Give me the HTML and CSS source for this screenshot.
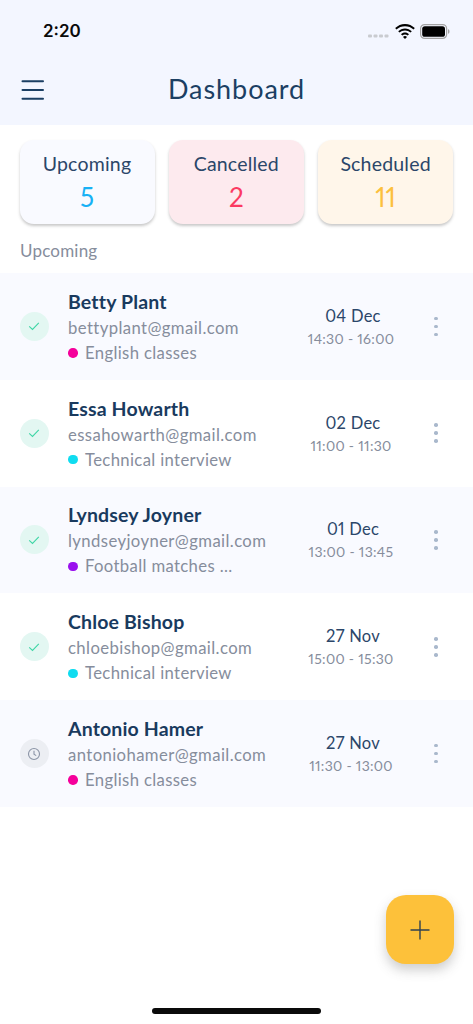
FILE: index.html
```html
<!DOCTYPE html>
<html lang="en">
<head>
<meta charset="utf-8">
<title>Dashboard</title>
<link rel="stylesheet" href="styles.css">
</head>
<body>
<div class="screen">
  <header class="top">
    <div class="status">
      <span class="time">2:20</span>
      <div class="status-icons">
        <svg class="signal" width="22" height="4" viewBox="0 0 22 4"><g fill="#c9cbd0"><rect x="0" y="0.5" width="4" height="3" rx="1"/><rect x="5.5" y="0.5" width="4" height="3" rx="1"/><rect x="11" y="0.5" width="4" height="3" rx="1"/><rect x="16.5" y="0.5" width="4" height="3" rx="1"/></g></svg>
        <svg width="20" height="15" viewBox="0 0 20 15"><path d="M10 2.2c-3.300 0-6.300 1.200-8.600 3.300L0.200 4.100C2.800 1.600 6.200 0 10 0s7.200 1.600 9.800 4.100l-1.200 1.400C16.300 3.400 13.300 2.200 10 2.200z M10 6.500c-2.100 0-4 .8-5.500 2.100L3.200 7.200C5 5.500 7.400 4.400 10 4.400s5 1.100 6.800 2.800l-1.300 1.400C14 7.300 12.100 6.500 10 6.500z M10 10.600c-1 0-1.900.4-2.600 1L6 10.200c1.100-1 2.500-1.700 4-1.700s2.900.7 4 1.700l-1.400 1.400c-.7-.6-1.600-1-2.600-1z M10 15l-2-2.100c.5-.5 1.200-.8 2-.8s1.500.3 2 .8z" fill="#000"/></svg>
        <svg width="30" height="15" viewBox="0 0 30 15"><rect x="0.600" y="0.600" width="26" height="13.800" rx="4" fill="none" stroke="#a3a3a3" stroke-width="1.200"/><rect x="2.200" y="2.200" width="22.800" height="10.600" rx="2.600" fill="#000"/><path d="M28 5.200c1 .3 1.500 1.200 1.500 2.300s-.5 2-1.500 2.300z" fill="#a3a3a3"/></svg>
      </div>
    </div>
    <div class="nav">
      <svg class="menu" width="24" height="20" viewBox="0 0 24 20"><g stroke="#1b3f63" stroke-width="2" stroke-linecap="round"><path d="M1.500 1.300h20.500"/><path d="M1.500 10h20.500"/><path d="M1.500 18.700h20.500"/></g></svg>
      <h1 class="title">Dashboard</h1>
    </div>
  </header>

  <section class="cards">
    <div class="card card-blue"><span class="card-label">Upcoming</span><span class="card-num num-blue">5</span></div>
    <div class="card card-red"><span class="card-label">Cancelled</span><span class="card-num num-red">2</span></div>
    <div class="card card-yellow"><span class="card-label">Scheduled</span><span class="card-num num-yellow">11</span></div>
  </section>

  <p class="section-label">Upcoming</p>

  <section class="list">
    <article class="row tint">
      <span class="badge badge-done"><svg width="14" height="14" viewBox="0 0 14 14"><path d="M2.200 7.300l3.300 3.200 6.300-6.600" fill="none" stroke="#3fd6a6" stroke-width="1.100"/></svg></span>
      <div class="info"><div class="name">Betty Plant</div><div class="email">bettyplant@gmail.com</div><div class="event"><i class="dot dot-pink"></i>English classes</div></div>
      <div class="when"><div class="date">04 Dec</div><div class="hours">14:30 - 16:00</div></div>
      <span class="more"><i></i><i></i><i></i></span>
    </article>
    <article class="row">
      <span class="badge badge-done"><svg width="14" height="14" viewBox="0 0 14 14"><path d="M2.200 7.300l3.300 3.200 6.300-6.600" fill="none" stroke="#3fd6a6" stroke-width="1.100"/></svg></span>
      <div class="info"><div class="name">Essa Howarth</div><div class="email">essahowarth@gmail.com</div><div class="event"><i class="dot dot-cyan"></i>Technical interview</div></div>
      <div class="when"><div class="date">02 Dec</div><div class="hours">11:00 - 11:30</div></div>
      <span class="more"><i></i><i></i><i></i></span>
    </article>
    <article class="row tint">
      <span class="badge badge-done"><svg width="14" height="14" viewBox="0 0 14 14"><path d="M2.200 7.300l3.300 3.200 6.300-6.600" fill="none" stroke="#3fd6a6" stroke-width="1.100"/></svg></span>
      <div class="info"><div class="name">Lyndsey Joyner</div><div class="email">lyndseyjoyner@gmail.com</div><div class="event"><i class="dot dot-purple"></i>Football matches ...</div></div>
      <div class="when"><div class="date">01 Dec</div><div class="hours">13:00 - 13:45</div></div>
      <span class="more"><i></i><i></i><i></i></span>
    </article>
    <article class="row">
      <span class="badge badge-done"><svg width="14" height="14" viewBox="0 0 14 14"><path d="M2.200 7.300l3.300 3.200 6.300-6.600" fill="none" stroke="#3fd6a6" stroke-width="1.100"/></svg></span>
      <div class="info"><div class="name">Chloe Bishop</div><div class="email">chloebishop@gmail.com</div><div class="event"><i class="dot dot-cyan"></i>Technical interview</div></div>
      <div class="when"><div class="date">27 Nov</div><div class="hours">15:00 - 15:30</div></div>
      <span class="more"><i></i><i></i><i></i></span>
    </article>
    <article class="row tint">
      <span class="badge badge-wait"><svg width="14" height="14" viewBox="0 0 14 14"><circle cx="7" cy="7" r="5.500" fill="none" stroke="#8b94a6" stroke-width="1.100"/><path d="M7 3.800V7.300l2.200 1.300" fill="none" stroke="#8b94a6" stroke-width="1.100"/></svg></span>
      <div class="info"><div class="name">Antonio Hamer</div><div class="email">antoniohamer@gmail.com</div><div class="event"><i class="dot dot-pink"></i>English classes</div></div>
      <div class="when"><div class="date">27 Nov</div><div class="hours">11:30 - 13:00</div></div>
      <span class="more"><i></i><i></i><i></i></span>
    </article>
  </section>

  <button class="fab" aria-label="Add"><svg width="20" height="20" viewBox="0 0 20 20"><path d="M10 0.500v19M0.500 10h19" stroke="#2f4050" stroke-width="1.400"/></svg></button>
  <div class="home-bar"></div>
</div>
</body>
</html>
```

FILE: styles.css
```css
* { box-sizing: border-box; }
html, body { margin: 0; padding: 0; background: #fff; }
body { font-family: "Lato", "Liberation Sans", sans-serif; color: #1b3f63; font-variant-numeric: proportional-nums; }
.screen { position: relative; width: 473px; height: 1024px; overflow: hidden; background: #fff; }

.top { height: 125px; background: #f3f6ff; padding-top: 19px; }
.status { height: 24px; display: flex; align-items: center; justify-content: space-between; padding: 0 23px 0 43px; }
.time { font-family: "Inter", sans-serif; font-size: 17px; font-weight: 600; color: #0a0a0a; }
.status-icons { display: flex; align-items: center; gap: 5px; }
.signal { margin-top: 9px; }
.nav { position: relative; display: flex; justify-content: center; align-items: center; height: 38px; margin-top: 26px; }
.menu { position: absolute; left: 21px; top: 11px; }
.title { margin: 0; font-family: "Lato", sans-serif; font-size: 27px; font-weight: 400; letter-spacing: 0.950px; color: #1b3f63; }

.cards { display: grid; grid-template-columns: 135px 135px 135px; column-gap: 14.300px; padding: 14.500px 0 0 19.500px; }
.card { height: 84.500px; border-radius: 14px; display: flex; flex-direction: column; align-items: center; padding-top: 11px; box-shadow: 0 2px 3px rgba(60, 60, 60, 0.28); }
.card-blue { background: #f9faff; }
.card-red { background: #fdeaee; }
.card-yellow { background: #fff6ea; }
.card-label { font-size: 19.500px; line-height: 25px; color: #2b4669; letter-spacing: 0.200px; }
.card-num { font-size: 26px; line-height: 34px; margin-top: 4px; }
.num-blue { color: #18b1f5; }
.num-red { color: #fb3a62; }
.num-yellow { color: #fcc03d; }

.section-label { margin: 16px 0 0 20px; font-size: 17px; line-height: 22px; color: #868d9c; letter-spacing: 0.200px; }

.list { margin-top: 11px; }
.row { display: flex; align-items: center; height: 106.800px; padding-left: 19.500px; }
.tint { background: #f9faff; }
.badge { flex: none; width: 29px; height: 29px; border-radius: 50%; display: flex; align-items: center; justify-content: center; }
.badge-done { background: #e3f7f2; }
.badge-wait { background: #eceef3; }
.info { flex: none; width: 228px; margin-left: 19.500px; padding-top: 2px; }
.name { font-size: 19.500px; font-weight: 700; line-height: 24px; color: #193a5e; letter-spacing: 0.150px; }
.email { font-size: 16.700px; line-height: 24px; margin-top: 2px; color: #868d9c; letter-spacing: 0.400px; }
.event { display: flex; align-items: center; font-size: 16.700px; line-height: 24px; margin-top: 1px; color: #868d9c; letter-spacing: 0.350px; }
.dot { width: 9.500px; height: 9.500px; border-radius: 50%; margin-right: 7.500px; flex: none; }
.dot-pink { background: #f5009b; }
.dot-cyan { background: #0fdcf0; }
.dot-purple { background: #9a10ee; }
.when { flex: none; width: 110px; padding-top: 2px; text-align: center; }
.date { font-size: 16.500px; line-height: 22px; padding-left: 4px; color: #2b4669; letter-spacing: 0.250px; }
.hours { font-size: 14px; line-height: 22px; margin-top: 1px; color: #868d9c; letter-spacing: 0.300px; }
.more { flex: none; margin-left: 28px; display: flex; flex-direction: column; gap: 4.500px; }
.more i { width: 3.500px; height: 3.500px; border-radius: 50%; background: #a9b8cc; }

.fab { position: absolute; left: 386px; top: 895px; width: 68px; height: 69px; border: 0; padding: 0; border-radius: 20px; background: #fdc13a; display: flex; align-items: center; justify-content: center; box-shadow: 0 6px 12px rgba(80, 80, 80, 0.28); }
.home-bar { position: absolute; left: 152px; top: 1008px; width: 169px; height: 6px; border-radius: 3px; background: #0a0a0a; }
```
